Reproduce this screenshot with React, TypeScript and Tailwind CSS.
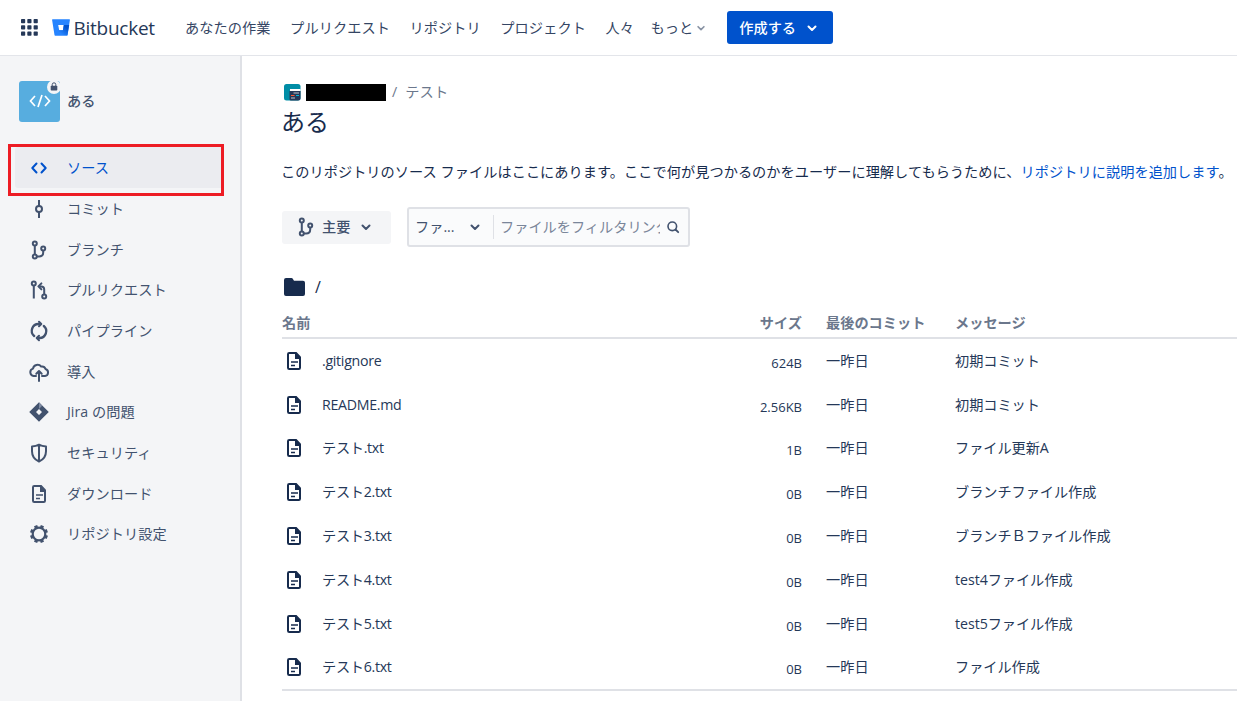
import type { ReactNode } from "react";

interface IconProps {
  className?: string;
}

interface FileRow {
  name: string;
  size: string;
  message: string;
}

const navItems = ["あなたの作業", "プルリクエスト", "リポジトリ", "プロジェクト", "人々"];

const files: FileRow[] = [
  { name: ".gitignore", size: "624B", message: "初期コミット" },
  { name: "README.md", size: "2.56KB", message: "初期コミット" },
  { name: "テスト.txt", size: "1B", message: "ファイル更新A" },
  { name: "テスト2.txt", size: "0B", message: "ブランチファイル作成" },
  { name: "テスト3.txt", size: "0B", message: "ブランチＢファイル作成" },
  { name: "テスト4.txt", size: "0B", message: "test4ファイル作成" },
  { name: "テスト5.txt", size: "0B", message: "test5ファイル作成" },
  { name: "テスト6.txt", size: "0B", message: "ファイル作成" },
];

const Icon = ({
  className = "h-6 w-6",
  children,
}: IconProps & { children: ReactNode }) => (
  <svg
    viewBox="0 0 24 24"
    className={`shrink-0 ${className}`}
    fill="none"
    stroke="currentColor"
    strokeWidth="2"
  >
    {children}
  </svg>
);

const ChevronIcon = ({ className }: IconProps) => (
  <Icon className={className}>
    <path d="M8.5 10.5 12 14l3.5-3.5" strokeLinecap="round" strokeLinejoin="round" />
  </Icon>
);

const SourceIcon = () => (
  <Icon>
    <path
      d="M9.5 7.5 5.300 12l4.200 4.500M14.500 7.500l4.200 4.500-4.200 4.500"
      strokeLinecap="round"
      strokeLinejoin="round"
    />
  </Icon>
);

const CommitIcon = () => (
  <Icon>
    <circle cx="12" cy="12" r="3" />
    <path d="M12 3v6M12 15v6" />
  </Icon>
);

const BranchIcon = () => (
  <Icon>
    <circle cx="7.8" cy="5.6" r="2" />
    <circle cx="7.8" cy="18.4" r="2" />
    <circle cx="16.2" cy="10.4" r="2" />
    <path d="M7.8 7.6v8.8M9.8 18.4h2.4c2.6 0 4-1.4 4-4v-2" />
  </Icon>
);

const PullRequestIcon = () => (
  <Icon>
    <circle cx="6.8" cy="5.6" r="2" />
    <circle cx="17.2" cy="18.4" r="2" />
    <path d="M6.8 7.6v13M17.2 16.4v-5c0-2-1-3-3-3h-1.6" />
    <path d="m14.4 5.4-3 3 3 3" strokeLinejoin="round" strokeLinecap="round" />
  </Icon>
);

const PipelineIcon = () => (
  <Icon>
    <path
      d="M13 5H11.500A6.800 6.800 0 0 0 7.200 17M11 19h1.500A6.800 6.800 0 0 0 16.800 7"
      strokeWidth="2.300"
      strokeLinecap="round"
    />
    <path
      d="m12 2.700 2.300 2.300L12 7.300M12 21.300 9.700 19l2.300-2.300"
      strokeLinecap="round"
      strokeLinejoin="round"
    />
  </Icon>
);

const DeployIcon = () => (
  <Icon>
    <path
      d="M9 16H6.600A3.800 3.800 0 0 1 6 8.600 4.600 4.600 0 0 1 14.200 6.600 3.800 3.800 0 0 1 18.500 9 3.600 3.600 0 0 1 18 16h-3"
      strokeLinejoin="round"
      strokeLinecap="round"
    />
    <path d="M12 21v-9M9.300 13.700 12 11l2.700 2.700" strokeLinecap="round" strokeLinejoin="round" />
  </Icon>
);

const JiraIcon = () => (
  <Icon>
    <path
      d="M12 2.200 21.800 12 12 21.800 2.200 12zM12 9l-3 3 3 3 3-3z"
      fill="currentColor"
      fillRule="evenodd"
      stroke="none"
    />
    <path d="m12 2.400 3.200 3.300L12 9z" fill="#7e8ba3" stroke="none" />
  </Icon>
);

const ShieldIcon = () => (
  <Icon>
    <path
      d="M12 3.700c-2.400 1.300-4.700 1.700-7 1.800v4.700c0 5 2.500 8.300 7 10.300 4.500-2 7-5.300 7-10.300V5.500c-2.300-.1-4.600-.5-7-1.800zM12 4v16"
      strokeLinejoin="round"
    />
  </Icon>
);

const DocumentIcon = ({ className }: IconProps) => (
  <Icon className={className}>
    <path
      d="M14 4H7.200C6.400 4 6 4.400 6 5.200v13.600c0 .8.400 1.200 1.200 1.200h9.600c.8 0 1.200-.4 1.200-1.200V9"
      strokeLinejoin="round"
    />
    <path d="M13 3h1.500L19 7.800V10h-6z" fill="currentColor" stroke="none" />
    <path d="M9 13h7M9 16.500h4" strokeWidth="1.700" />
  </Icon>
);

const SettingsIcon = () => (
  <Icon>
    <circle cx="12" cy="12" r="6.300" strokeWidth="2.200" />
    <g strokeWidth="3.400">
      {[22.5, 67.5, 112.5, 157.5, 202.5, 247.5, 292.5, 337.5].map((angle) => (
        <path key={angle} d="M12 3v3" transform={`rotate(${angle} 12 12)`} />
      ))}
    </g>
  </Icon>
);

const sideItems = [
  { label: "コミット", icon: <CommitIcon /> },
  { label: "ブランチ", icon: <BranchIcon /> },
  { label: "プルリクエスト", icon: <PullRequestIcon /> },
  { label: "パイプライン", icon: <PipelineIcon /> },
  { label: "導入", icon: <DeployIcon /> },
  { label: "Jira の問題", icon: <JiraIcon /> },
  { label: "セキュリティ", icon: <ShieldIcon /> },
  { label: "ダウンロード", icon: <DocumentIcon /> },
  { label: "リポジトリ設定", icon: <SettingsIcon /> },
];

const BitbucketLogo = () => (
  <svg viewBox="0 0 18 17" className="h-[17px] w-[18px] shrink-0">
    <defs>
      <linearGradient id="bucket" x1="1" y1="0.200" x2="0.400" y2="0.800">
        <stop offset="0.200" stopColor="#0052cc" />
        <stop offset="1" stopColor="#2684ff" />
      </linearGradient>
    </defs>
    <path
      d="M.6.300h16.800c.4 0 .6.300.5.600l-2.400 15c-.1.400-.3.600-.7.600H3.300c-.4 0-.7-.2-.8-.6L.1.900C0 .6.200.300.600.300zM7.200 11.200h3.700l.9-5.300H6.200z"
      fill="#2684ff"
      fillRule="evenodd"
    />
    <path d="M17.200 5.900h-5.400l-.9 5.300H7.200l-4.400 5.100c.2.100.3.200.5.200h11.500c.4 0 .6-.2.700-.6z" fill="url(#bucket)" />
  </svg>
);

const Header = () => (
  <header className="flex h-14 shrink-0 items-center border-b border-[#e3e5ea] pl-[21px] text-[#344563]">
    <svg viewBox="0 0 17 17" className="h-[17px] w-[17px] shrink-0" fill="#253858">
      {[0, 6.3, 12.6].map((y) =>
        [0, 6.3, 12.6].map((x) => (
          <rect key={`${x}-${y}`} x={x} y={y} width="4.200" height="4.200" rx="0.800" />
        )),
      )}
    </svg>
    <div className="ml-[13.500px] flex w-[133.500px] items-center gap-1">
      <BitbucketLogo />
      <span className="pt-0.5 text-[19px] leading-none font-medium tracking-[-0.250px] text-[#253858]">
        Bitbucket
      </span>
    </div>
    <nav className="flex items-center gap-[19.500px] tracking-[0.080px]">
      {navItems.map((item) => (
        <a key={item}>{item}</a>
      ))}
      <a className="-ml-[3px] flex items-center">
        もっと
        <ChevronIcon className="-ml-0.5 h-5 w-5 text-[#8993a4]" />
      </a>
    </nav>
    <button className="ml-4 flex h-[33px] w-[106px] items-center rounded-[3px] bg-[#0052cc] pl-3 font-medium text-white">
      作成する
      <ChevronIcon className="ml-1 h-6 w-6" />
    </button>
  </header>
);

const Sidebar = () => (
  <aside className="w-[242px] shrink-0 border-r-2 border-[#dfe1e6] bg-[#f4f5f7] text-[#42526e]">
    <div className="flex h-[88px] items-center gap-[7px] pl-[19px] pt-0.5">
      <div className="relative flex h-[41px] w-[41px] items-center justify-center rounded-[3px] bg-[#57addf] text-white">
        <svg
          viewBox="0 0 22 14"
          className="h-3.5 w-[22px]"
          fill="none"
          stroke="currentColor"
          strokeWidth="1.700"
        >
          <path d="M6 2 1.500 7 6 12M16 2l4.500 5-4.500 5M13 1 9 13" />
        </svg>
        <span className="absolute -top-[1px] -right-[1px] flex h-[14px] w-[14px] items-center justify-center rounded-full bg-[#f4f5f7]">
          <svg viewBox="0 0 8 9" className="h-[9px] w-2" fill="#42526e">
            <rect x="0.700" y="3.800" width="6.600" height="4.700" rx="0.800" />
            <path d="M2.200 4V2.600a1.800 1.800 0 0 1 3.600 0V4" fill="none" stroke="#42526e" />
          </svg>
        </span>
      </div>
      <span className="font-medium">ある</span>
    </div>
    <div className="ml-2 flex h-[52px] w-[216px] border-3 border-[#ed1c24] pb-[5px] pl-1">
      <a className="flex flex-1 items-center rounded-l-[3px] bg-[#ebecf0] pt-px pl-3 text-[#0052cc]">
        <SourceIcon />
        <span className="ml-4">ソース</span>
      </a>
    </div>
    <ul className="-mt-[7.500px]">
      {sideItems.map(({ label, icon }) => (
        <li key={label} className="flex h-[40.700px] items-center pl-[27px]">
          {icon}
          <span className="ml-4 tracking-[0.050px]">{label}</span>
        </li>
      ))}
    </ul>
  </aside>
);

const FileTable = () => (
  <div className="mt-[9px] text-[#253858]">
    <div className="flex h-[31px] items-center border-b-2 border-[#dfe1e6] font-bold text-[#6b778c]">
      <span className="w-[420px]">名前</span>
      <span className="w-[100px] text-right">サイズ</span>
      <span className="ml-6 w-[129px]">最後のコミット</span>
      <span>メッセージ</span>
    </div>
    <div className="border-b-2 border-[#dfe1e6]">
      {files.map(({ name, size, message }) => (
        <div key={name} className="flex h-[43.800px] items-center">
          <DocumentIcon className="h-6 w-6 text-[#172b4d]" />
          <span className="ml-4 w-[380px] tracking-[-0.300px]">{name}</span>
          <span className="w-[100px] pt-1 text-right text-[13px]">{size}</span>
          <span className="ml-6 w-[129px]">一昨日</span>
          <span className="tracking-[-0.050px]">{message}</span>
        </div>
      ))}
    </div>
  </div>
);

const App = () => (
  <div className="flex h-[701px] w-[1237px] flex-col overflow-hidden bg-white font-['Open_Sans','Noto_Sans_CJK_JP',sans-serif] text-[14.200px] leading-5 whitespace-nowrap">
    <Header />
    <div className="flex min-h-0 flex-1">
      <Sidebar />
      <main className="min-w-0 flex-1 pl-10">
        <div className="mt-[26px] flex h-5 items-center text-[#6b778c]">
          <svg viewBox="0 0 17 17" className="ml-0.5 h-[17px] w-[17px] shrink-0">
            <rect width="16.500" height="16.500" rx="2.500" fill="#008da6" />
            <path d="M6 5h10.500v2H6z" fill="#fff" />
            <path d="M5.500 7h11v7a2.500 2.500 0 0 1-2.500 2.500H7A1.500 1.500 0 0 1 5.500 15z" fill="#253858" />
            <path d="M9.500 9h5.500M7 14h4" stroke="#c1c7d0" />
            <path d="M7 11.500h3.500" stroke="#ff5630" />
            <path d="M12 11.500h3" stroke="#00b8d9" />
          </svg>
          <span className="ml-[5px] h-[17px] w-20 bg-black" />
          <span className="ml-1.5">/</span>
          <span className="ml-2 tracking-[0.200px]">テスト</span>
        </div>
        <h1 className="-ml-px pt-px text-[24px] leading-[38px] text-[#172b4d]">ある</h1>
        <p className="mt-[21px] -ml-px tracking-[0.040px] text-[#172b4d]">
          このリポジトリのソース ファイルはここにあります。ここで何が見つかるのかをユーザーに理解してもらうために、
          <a className="text-[#0052cc]">リポジトリに説明を追加します</a>。
        </p>
        <div className="mt-[25px] flex h-10 items-center">
          <button className="flex h-[33px] w-[109px] items-center rounded-[3px] bg-[#f4f5f7] pl-3 text-[#42526e]">
            <BranchIcon />
            <span className="ml-1 font-medium">主要</span>
            <ChevronIcon className="ml-1 h-6 w-6" />
          </button>
          <div className="ml-4 flex h-10 w-[283px] items-center rounded-[3px] border-2 border-[#dfe1e6] bg-[#fafbfc] pl-1.5 text-[#42526e]">
            <span className="w-12">ファ...</span>
            <ChevronIcon className="h-6 w-6" />
            <span className="ml-[6px] h-6 w-px bg-[#dfe1e6]" />
            <span className="ml-[6px] w-40 overflow-hidden text-[#7a869a]">
              ファイルをフィルタリング
            </span>
            <Icon className="ml-px h-6 w-6">
              <circle cx="11.300" cy="11.300" r="4.300" strokeWidth="1.600" />
              <path d="m14.500 14.500 2.700 2.700" strokeWidth="1.800" strokeLinecap="round" />
            </Icon>
          </div>
        </div>
        <div className="mt-[28px] flex h-6 items-center text-[#172b4d]">
          <svg viewBox="0 0 21 18" className="ml-0.5 h-[18px] w-[21px]" fill="currentColor">
            <path d="M2 0h5.500c.6 0 1 .2 1.300.7L10 2.800h9a2 2 0 0 1 2 2V16a2 2 0 0 1-2 2H2a2 2 0 0 1-2-2V2a2 2 0 0 1 2-2z" />
          </svg>
          <span className="ml-2.5 text-base">/</span>
        </div>
        <FileTable />
      </main>
    </div>
  </div>
);

export default App;
